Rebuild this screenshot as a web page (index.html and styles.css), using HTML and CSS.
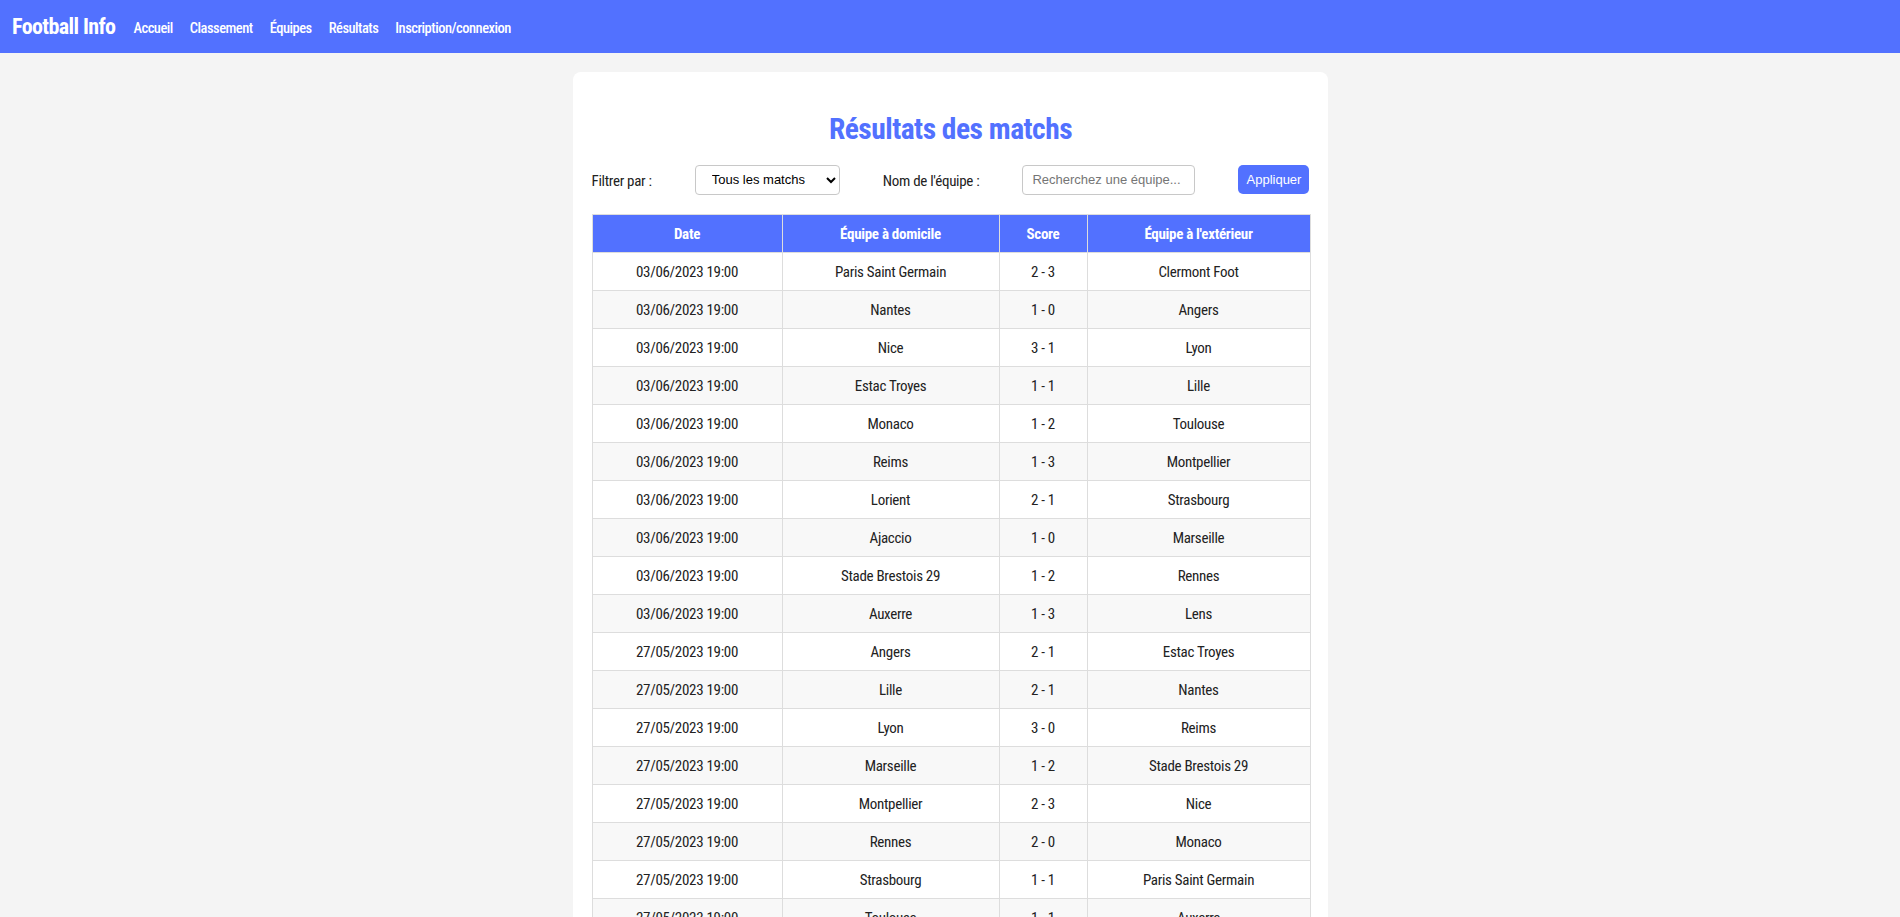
FILE: index.html
```html
<!DOCTYPE html>
<html lang="fr">
<head>
<meta charset="utf-8">
<title>Football Info - Résultats</title>
<link rel="stylesheet" href="styles.css">
</head>
<body>
<header class="navbar">
  <a class="brand" href="#">Football Info</a>
  <nav class="nav-links">
    <a href="#">Accueil</a>
    <a href="#">Classement</a>
    <a href="#">Équipes</a>
    <a href="#">Résultats</a>
    <a href="#">Inscription/connexion</a>
  </nav>
</header>
<main class="card">
  <h1 class="title">Résultats des matchs</h1>
  <form class="filters">
    <label class="filter-label" for="filtre">Filtrer par :</label>
    <select id="filtre" class="filter-select">
      <option>Tous les matchs</option>
    </select>
    <label class="filter-label" for="equipe">Nom de l'équipe :</label>
    <input id="equipe" class="filter-input" type="text" placeholder="Recherchez une équipe...">
    <button type="button" class="btn">Appliquer</button>
  </form>
  <table class="results">
    <colgroup>
      <col class="c-date"><col class="c-home"><col class="c-score"><col class="c-away">
    </colgroup>
    <thead>
      <tr><th>Date</th><th>Équipe à domicile</th><th>Score</th><th>Équipe à l'extérieur</th></tr>
    </thead>
    <tbody>
      <tr><td>03/06/2023 19:00</td><td>Paris Saint Germain</td><td>2 - 3</td><td>Clermont Foot</td></tr>
      <tr><td>03/06/2023 19:00</td><td>Nantes</td><td>1 - 0</td><td>Angers</td></tr>
      <tr><td>03/06/2023 19:00</td><td>Nice</td><td>3 - 1</td><td>Lyon</td></tr>
      <tr><td>03/06/2023 19:00</td><td>Estac Troyes</td><td>1 - 1</td><td>Lille</td></tr>
      <tr><td>03/06/2023 19:00</td><td>Monaco</td><td>1 - 2</td><td>Toulouse</td></tr>
      <tr><td>03/06/2023 19:00</td><td>Reims</td><td>1 - 3</td><td>Montpellier</td></tr>
      <tr><td>03/06/2023 19:00</td><td>Lorient</td><td>2 - 1</td><td>Strasbourg</td></tr>
      <tr><td>03/06/2023 19:00</td><td>Ajaccio</td><td>1 - 0</td><td>Marseille</td></tr>
      <tr><td>03/06/2023 19:00</td><td>Stade Brestois 29</td><td>1 - 2</td><td>Rennes</td></tr>
      <tr><td>03/06/2023 19:00</td><td>Auxerre</td><td>1 - 3</td><td>Lens</td></tr>
      <tr><td>27/05/2023 19:00</td><td>Angers</td><td>2 - 1</td><td>Estac Troyes</td></tr>
      <tr><td>27/05/2023 19:00</td><td>Lille</td><td>2 - 1</td><td>Nantes</td></tr>
      <tr><td>27/05/2023 19:00</td><td>Lyon</td><td>3 - 0</td><td>Reims</td></tr>
      <tr><td>27/05/2023 19:00</td><td>Marseille</td><td>1 - 2</td><td>Stade Brestois 29</td></tr>
      <tr><td>27/05/2023 19:00</td><td>Montpellier</td><td>2 - 3</td><td>Nice</td></tr>
      <tr><td>27/05/2023 19:00</td><td>Rennes</td><td>2 - 0</td><td>Monaco</td></tr>
      <tr><td>27/05/2023 19:00</td><td>Strasbourg</td><td>1 - 1</td><td>Paris Saint Germain</td></tr>
      <tr><td>27/05/2023 19:00</td><td>Toulouse</td><td>1 - 1</td><td>Auxerre</td></tr>
    </tbody>
  </table>
</main>
</body>
</html>
```

FILE: styles.css
```css
* { box-sizing: border-box; }

body {
  margin: 0;
  background: #f4f4f4;
  font-family: "Roboto", "DejaVu Sans Condensed", sans-serif;
  font-stretch: 75%;
  color: #333;
}

.navbar {
  height: 53px;
  background: #5271ff;
  display: flex;
  align-items: center;
  padding: 0 12px;
}

.brand {
  color: #fff;
  text-decoration: none;
  font-size: 22px;
  font-weight: bold;
  letter-spacing: -0.6px;
  margin-right: 18px;
}

.nav-links {
  display: flex;
  gap: 17px;
  padding-top: 3px;
}

.nav-links a {
  color: #fff;
  text-decoration: none;
  font-size: 14.5px;
  font-weight: 500;
  letter-spacing: -0.5px;
}

.card {
  width: 755px;
  margin: 19px auto 0;
  background: #fff;
  border-radius: 8px;
  padding: 35px 18px 20px 19px;
}

.title {
  margin: 0 0 13px;
  text-align: center;
  color: #5271ff;
  font-size: 29.5px;
  font-weight: bold;
  letter-spacing: -0.5px;
  line-height: 44px;
}

.filters {
  display: flex;
  align-items: center;
  justify-content: space-between;
  height: 31px;
  margin-bottom: 19px;
}

.filter-label {
  font-size: 15px;
  letter-spacing: -0.3px;
  color: #222;
  padding-top: 2px;
}

.filter-select,
.filter-input,
.btn {
  font-family: "Liberation Sans", Arial, sans-serif;
  font-stretch: normal;
  font-size: 13px;
}

.filter-select {
  width: 145px;
  height: 30px;
  border: 1px solid #c8c8c8;
  border-radius: 4px;
  background: #fff;
  color: #000;
  padding: 0 6px 0 12px;
}

.filter-input {
  width: 173px;
  height: 30px;
  border: 1px solid #c8c8c8;
  border-radius: 4px;
  padding: 0 9px;
  color: #333;
}

.filter-input::placeholder { color: #757575; }

.btn {
  width: 71px;
  height: 29px;
  border: none;
  border-radius: 5px;
  background: #5271ff;
  color: #fff;
  padding: 0;
}

.results {
  width: 718px;
  border-collapse: collapse;
  table-layout: fixed;
}

.c-date { width: 190px; }
.c-home { width: 217px; }
.c-score { width: 88px; }
.c-away { width: 223px; }

.results th,
.results td {
  border: 1px solid #ddd;
  text-align: center;
  height: 38px;
  padding: 0 6px;
  font-size: 15px;
  letter-spacing: -0.3px;
}

.results th {
  background: #5271ff;
  color: #fff;
  font-weight: bold;
}

.results td {
  color: #222;
  font-weight: 400;
}

.results tbody tr:nth-child(even) td { background: #f8f8f8; }
```
